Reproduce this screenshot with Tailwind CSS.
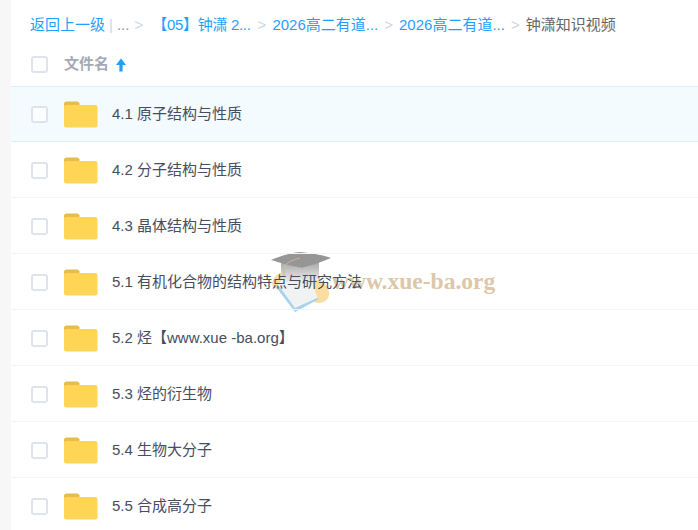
<!DOCTYPE html>
<html lang="zh-CN">
<head>
    <meta charset="UTF-8">
    <meta name="viewport" content="width=device-width, initial-scale=1.0">
    <title>文件列表</title>
    <script src="https://cdn.jsdelivr.net/npm/@tailwindcss/browser@4"></script>
</head>
<body class="bg-[#f7f7f7] font-['Liberation_Sans','Noto_Sans_CJK_SC',sans-serif] text-[15px] overflow-hidden">

    <div class="relative ml-[11px] w-[687px] h-[530px] bg-white overflow-hidden">
        <!-- 水印 -->
        <div class="absolute left-[259px] top-[250px] w-[240px] h-[64px] pointer-events-none">
            <svg class="absolute left-0 top-0" width="70" height="64" viewBox="0 0 70 64">
                <defs>
                    <linearGradient id="cap" x1="0" y1="0" x2="0" y2="1">
                        <stop offset="0" stop-color="#a8a8a8"/>
                        <stop offset="1" stop-color="#f6f6f6"/>
                    </linearGradient>
                </defs>
                <path d="M2 34 C3 27 8 22 14 22 L50 30 C58 34 61 42 58 48 C55 53 49 54 44 52 L14 42 C8 40 3 38 2 34Z" fill="#fbd995" opacity="0.9"/>
                <path d="M7 37 L25 61 L48 49 L40 26 L14 26Z" fill="#f1f2f3"/>
                <path d="M6 37 L25 62 L49 49 L47 48 L25 58 L9 36Z" fill="#a6d3ee"/>
                <path d="M11 12 L11 28 C20 37 40 37 49 27 L49 12 L32 18Z" fill="url(#cap)"/>
                <path d="M1 10 C10 6 20 3 30 2 C42 3 52 5 61 8 C52 12 42 15 32 18 C22 16 10 13 1 10Z" fill="#969696"/>
                <path d="M30 8 C22 10 16 13 14 17 L14 26" fill="none" stroke="#c9b890" stroke-width="1"/>
            </svg>
            <span class="absolute left-[62px] top-[19px] font-['Liberation_Serif',serif] font-bold text-[23.500px] leading-[24px] text-[#dcc7a8] whitespace-nowrap">www.xue-ba.org</span>
        </div>

        <!-- 面包屑 -->
        <nav class="relative h-[50px] pl-[19px] flex items-center text-[#1f9fff] whitespace-nowrap">
            <a>返回上一级</a>
            <span class="ml-[4px] text-[#c7d8ea]">|</span>
            <span class="ml-[4px] text-[#8c97a8]">...</span>
            <span class="ml-[5px] text-[#c9d6e6]">&gt;</span>
            <a class="ml-[9px] tracking-[-0.3px]">【05】钟潇 2...</a>
            <span class="ml-[7px] text-[#c9d6e6]">&gt;</span>
            <a class="ml-[6px]">2026高二有道...</a>
            <span class="ml-[6px] text-[#c9d6e6]">&gt;</span>
            <a class="ml-[6px]">2026高二有道...</a>
            <span class="ml-[6px] text-[#c9d6e6]">&gt;</span>
            <span class="ml-[6px] text-[#666666]">钟潇知识视频</span>
        </nav>

        <!-- 表头 -->
        <div class="relative h-[36px] pb-[8px] pl-[20px] flex items-center">
            <span class="w-[17px] h-[17px] rounded-[3px] border-2 border-[#dfe4ec] bg-white"></span>
            <span class="ml-[16px] font-bold text-[#a4a9b5]">文件名</span>
            <svg class="ml-[7px] mt-[1px]" width="10" height="14" viewBox="0 0 10 14"><path d="M5 0.500 L10 7 H6.600 V13.500 H3.400 V7 H0 Z" fill="#1f9fff"/></svg>
        </div>

        <!-- 文件列表 -->
        <ul class="relative">
            <li class="h-[56px] pl-[20px] flex items-center bg-[#f4fbff] border-y border-[#daeefc] text-[#454d5e]">
                <span class="w-[17px] h-[17px] rounded-[3px] border-2 border-[#dfe4ec] bg-white/60"></span>
                <svg class="ml-[16px]" width="34" height="27" viewBox="0 0 34 27"><path d="M0 3a2.500 2.500 0 0 1 2.500-2.500h10.500a2.500 2.500 0 0 1 2.500 2.500v3H0z" fill="#e8bb4a"/><rect y="4" width="33.500" height="22.500" rx="2" fill="#ffd556"/></svg>
                <span class="ml-[14px]">4.1 原子结构与性质</span>
            </li>
            <li class="h-[56px] pl-[20px] flex items-center border-y border-t-transparent border-b-[#f2f4f7] text-[#454d5e]">
                <span class="w-[17px] h-[17px] rounded-[3px] border-2 border-[#dfe4ec] bg-white"></span>
                <svg class="ml-[16px]" width="34" height="27" viewBox="0 0 34 27"><path d="M0 3a2.500 2.500 0 0 1 2.500-2.500h10.500a2.500 2.500 0 0 1 2.500 2.500v3H0z" fill="#e8bb4a"/><rect y="4" width="33.500" height="22.500" rx="2" fill="#ffd556"/></svg>
                <span class="ml-[14px]">4.2 分子结构与性质</span>
            </li>
            <li class="h-[56px] pl-[20px] flex items-center border-y border-t-transparent border-b-[#f2f4f7] text-[#454d5e]">
                <span class="w-[17px] h-[17px] rounded-[3px] border-2 border-[#dfe4ec] bg-white"></span>
                <svg class="ml-[16px]" width="34" height="27" viewBox="0 0 34 27"><path d="M0 3a2.500 2.500 0 0 1 2.500-2.500h10.500a2.500 2.500 0 0 1 2.500 2.500v3H0z" fill="#e8bb4a"/><rect y="4" width="33.500" height="22.500" rx="2" fill="#ffd556"/></svg>
                <span class="ml-[14px]">4.3 晶体结构与性质</span>
            </li>
            <li class="h-[56px] pl-[20px] flex items-center border-y border-t-transparent border-b-[#f2f4f7] text-[#454d5e]">
                <span class="w-[17px] h-[17px] rounded-[3px] border-2 border-[#dfe4ec] bg-white"></span>
                <svg class="ml-[16px]" width="34" height="27" viewBox="0 0 34 27"><path d="M0 3a2.500 2.500 0 0 1 2.500-2.500h10.500a2.500 2.500 0 0 1 2.500 2.500v3H0z" fill="#e8bb4a"/><rect y="4" width="33.500" height="22.500" rx="2" fill="#ffd556"/></svg>
                <span class="ml-[14px]">5.1 有机化合物的结构特点与研究方法</span>
            </li>
            <li class="h-[56px] pl-[20px] flex items-center border-y border-t-transparent border-b-[#f2f4f7] text-[#454d5e]">
                <span class="w-[17px] h-[17px] rounded-[3px] border-2 border-[#dfe4ec] bg-white"></span>
                <svg class="ml-[16px]" width="34" height="27" viewBox="0 0 34 27"><path d="M0 3a2.500 2.500 0 0 1 2.500-2.500h10.500a2.500 2.500 0 0 1 2.500 2.500v3H0z" fill="#e8bb4a"/><rect y="4" width="33.500" height="22.500" rx="2" fill="#ffd556"/></svg>
                <span class="ml-[14px]">5.2 烃【www.xue -ba.org】</span>
            </li>
            <li class="h-[56px] pl-[20px] flex items-center border-y border-t-transparent border-b-[#f2f4f7] text-[#454d5e]">
                <span class="w-[17px] h-[17px] rounded-[3px] border-2 border-[#dfe4ec] bg-white"></span>
                <svg class="ml-[16px]" width="34" height="27" viewBox="0 0 34 27"><path d="M0 3a2.500 2.500 0 0 1 2.500-2.500h10.500a2.500 2.500 0 0 1 2.500 2.500v3H0z" fill="#e8bb4a"/><rect y="4" width="33.500" height="22.500" rx="2" fill="#ffd556"/></svg>
                <span class="ml-[14px]">5.3 烃的衍生物</span>
            </li>
            <li class="h-[56px] pl-[20px] flex items-center border-y border-t-transparent border-b-[#f2f4f7] text-[#454d5e]">
                <span class="w-[17px] h-[17px] rounded-[3px] border-2 border-[#dfe4ec] bg-white"></span>
                <svg class="ml-[16px]" width="34" height="27" viewBox="0 0 34 27"><path d="M0 3a2.500 2.500 0 0 1 2.500-2.500h10.500a2.500 2.500 0 0 1 2.500 2.500v3H0z" fill="#e8bb4a"/><rect y="4" width="33.500" height="22.500" rx="2" fill="#ffd556"/></svg>
                <span class="ml-[14px]">5.4 生物大分子</span>
            </li>
            <li class="h-[56px] pl-[20px] flex items-center border-y border-t-transparent border-b-[#f2f4f7] text-[#454d5e]">
                <span class="w-[17px] h-[17px] rounded-[3px] border-2 border-[#dfe4ec] bg-white"></span>
                <svg class="ml-[16px]" width="34" height="27" viewBox="0 0 34 27"><path d="M0 3a2.500 2.500 0 0 1 2.500-2.500h10.500a2.500 2.500 0 0 1 2.500 2.500v3H0z" fill="#e8bb4a"/><rect y="4" width="33.500" height="22.500" rx="2" fill="#ffd556"/></svg>
                <span class="ml-[14px]">5.5 合成高分子</span>
            </li>
        </ul>
    </div>

</body>
</html>
